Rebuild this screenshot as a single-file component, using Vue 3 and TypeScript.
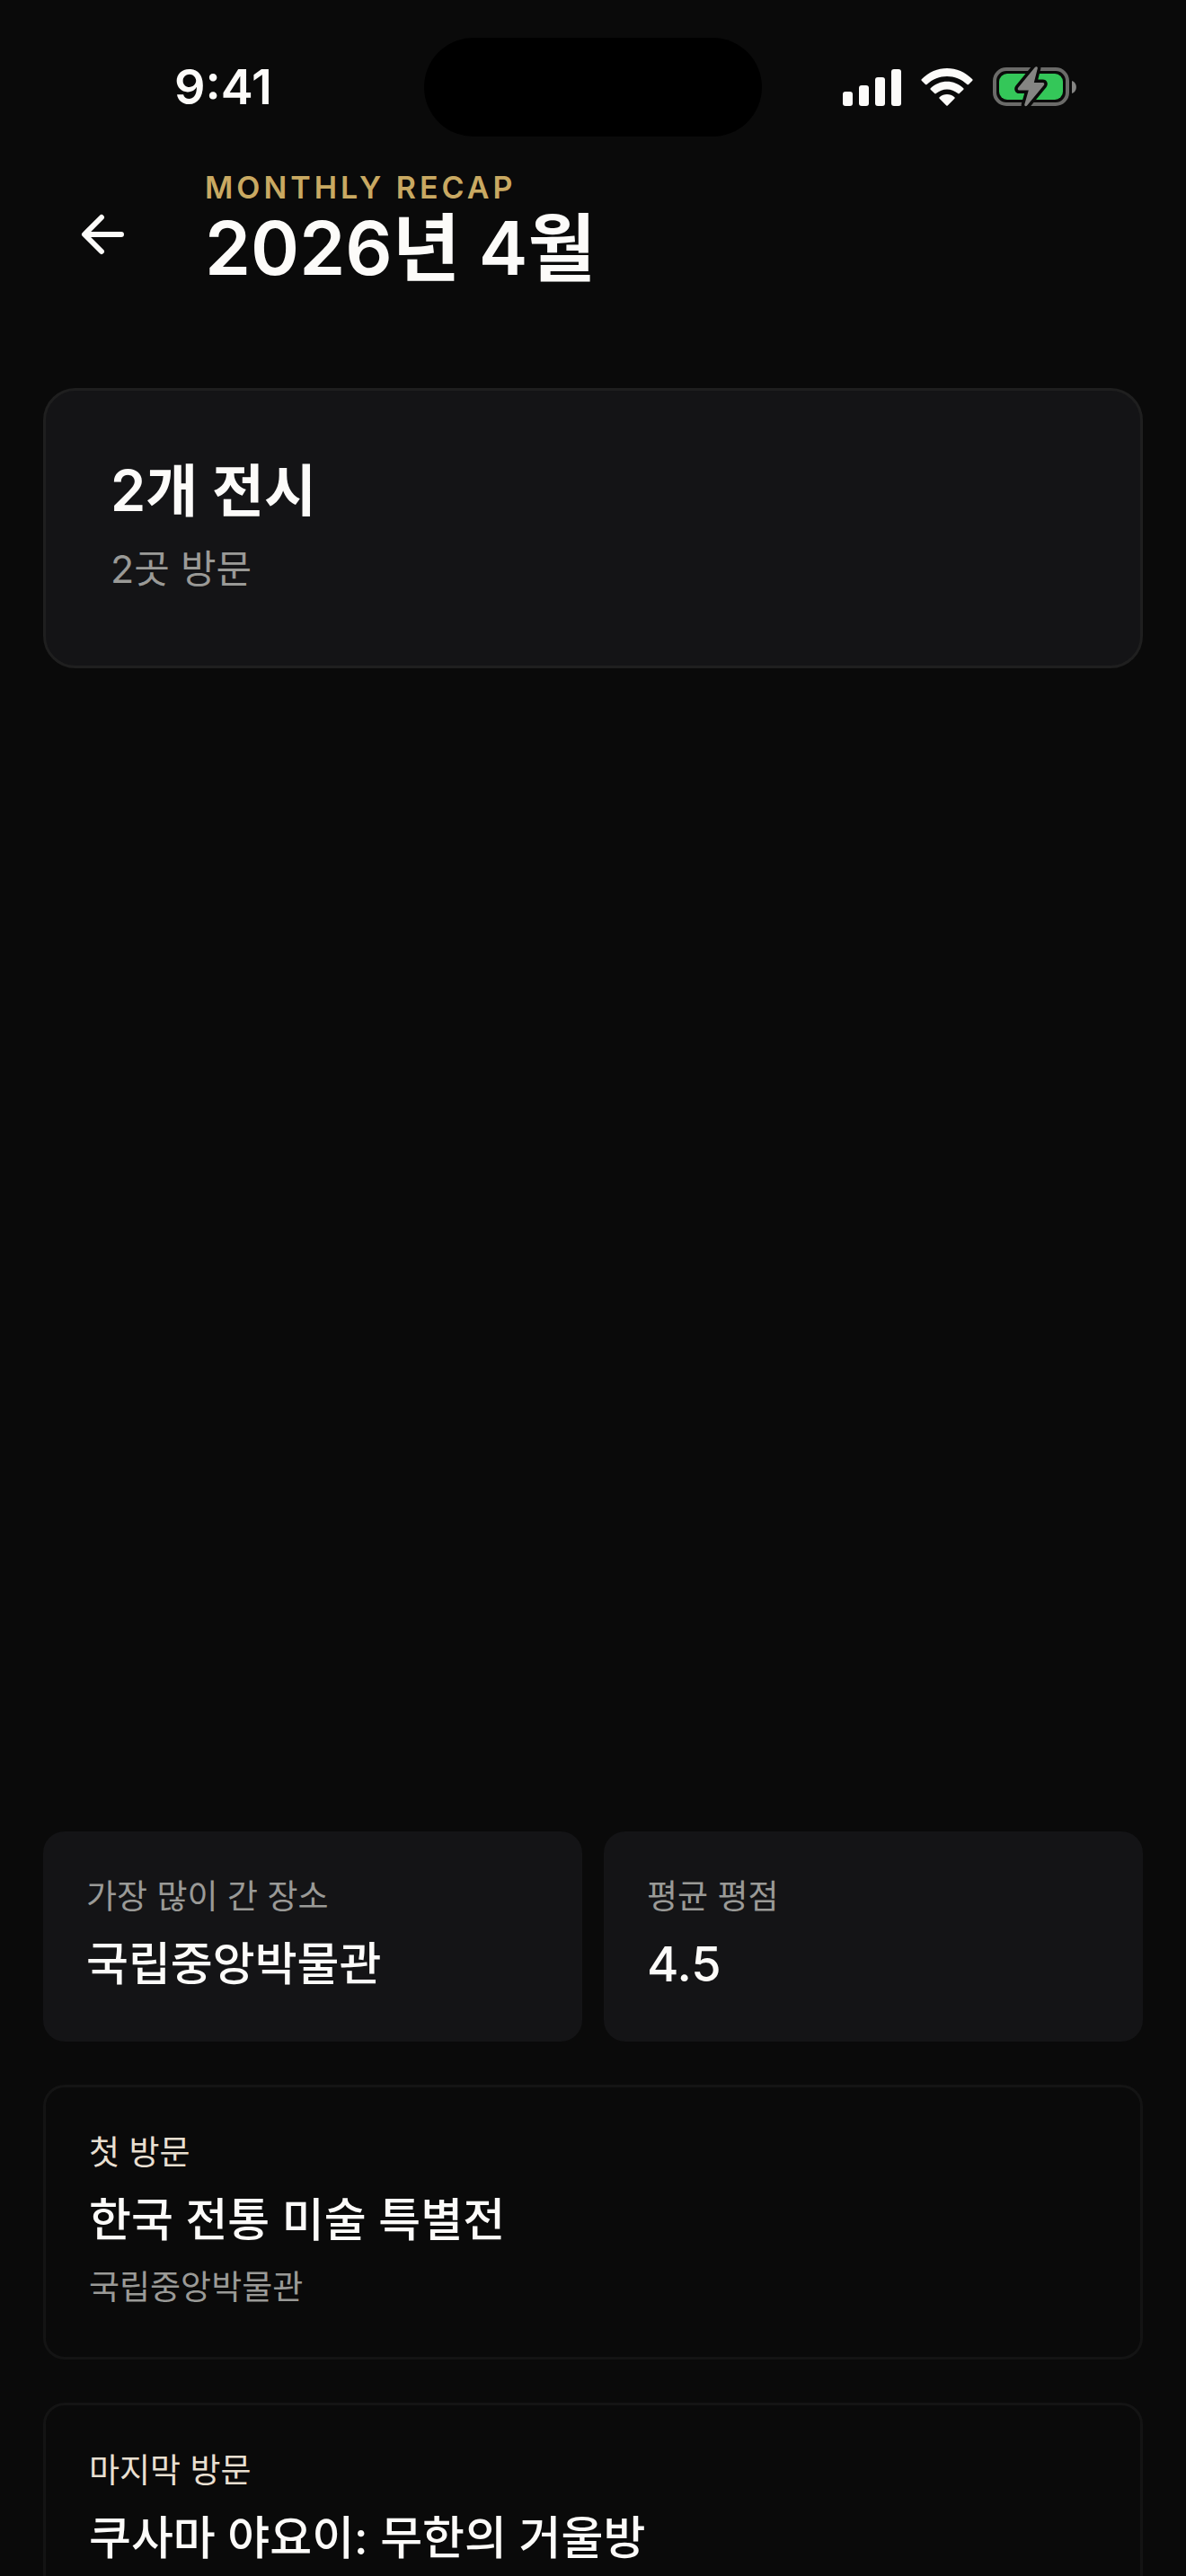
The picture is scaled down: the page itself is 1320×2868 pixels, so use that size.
<script setup lang="ts">
interface Stat {
  label: string
  value: string
  numeric?: boolean
}

interface Visit {
  label: string
  title: string
  place?: string
}

const stats: Stat[] = [
  { label: '가장 많이 간 장소', value: '국립중앙박물관' },
  { label: '평균 평점', value: '4.5', numeric: true },
]

const visits: Visit[] = [
  { label: '첫 방문', title: '한국 전통 미술 특별전', place: '국립중앙박물관' },
  { label: '마지막 방문', title: '쿠사마 야요이: 무한의 거울방' },
]
</script>

<template>
  <div class="screen">
    <div class="status-bar">
      <time class="clock">9:41</time>
      <div class="island"></div>
      <div class="indicators">
        <svg width="65" height="44" viewBox="0 0 65 44" fill="#fcfbf9" aria-hidden="true">
          <rect x="0" y="27" width="11" height="16" rx="3" />
          <rect x="18" y="20" width="11" height="23" rx="3" />
          <rect x="36" y="11" width="11" height="32" rx="3" />
          <rect x="54" y="2" width="11" height="41" rx="3" />
        </svg>
        <svg width="58" height="44" viewBox="0 0 58 44" fill="#fcfbf9" aria-hidden="true">
          <path d="M.7 13.2C16.500-3.200 41.500-3.200 57.300 13.200Q58 14 57.300 14.700L53 19Q52.200 19.700 51.400 19C38.800 6.900 19.200 6.900 6.600 19Q5.800 19.700 5 19L.7 14.700Q0 14 .7 13.200Z" />
          <path d="M10.700 23.300C21 13.200 37 13.200 47.300 23.300Q48 24 47.300 24.700L42.800 29.100Q42 29.800 41.200 29.100C34.200 22.800 23.800 22.800 16.800 29.100Q16 29.800 15.200 29.100L10.700 24.700Q10 24 10.700 23.300Z" />
          <path d="M20.600 33.200C25.400 28.900 32.600 28.900 37.400 33.200Q38.200 34 37.400 34.800L29.700 42.500Q29 43.200 28.300 42.500L20.600 34.800Q19.800 34 20.600 33.200Z" />
        </svg>
        <svg width="93" height="46" viewBox="0 0 93 46" aria-hidden="true">
          <rect x="2" y="3" width="81" height="39" rx="13" fill="none" stroke="#6b6b69" stroke-width="4" />
          <rect x="7" y="8" width="71" height="29" rx="9" fill="#34c759" />
          <path d="M88 16C94.500 18 94.500 28 88 30Z" fill="#858583" />
          <path d="M46.800 1C48.200-.4 50.200.2 49.800 2.200L45.800 18H55.500C57.300 18 57.800 19.600 56.700 21L38.300 43.300C37 44.900 34.800 44.200 35.300 42.200L39.800 26.500H29.500C27.700 26.500 27.200 24.800 28.300 23.400Z" fill="#858583" stroke="#0a0a0a" stroke-width="7" stroke-linejoin="round" paint-order="stroke" />
        </svg>
      </div>
    </div>

    <header class="header">
      <button class="back" type="button" aria-label="뒤로">
        <svg width="66" height="66" viewBox="0 0 66 66" fill="none" stroke="#fcfbf9" stroke-width="6" stroke-linecap="round" stroke-linejoin="round" aria-hidden="true">
          <path d="M54 33H14M32 14L13 33L32 52" />
        </svg>
      </button>
      <div class="heading">
        <p class="eyebrow">MONTHLY RECAP</p>
        <h1 class="month">2026년 4월</h1>
      </div>
    </header>

    <main class="content">
      <section class="summary">
        <h2 class="summary-count">2개 전시</h2>
        <p class="summary-places">2곳 방문</p>
      </section>

      <div class="gallery"></div>

      <dl class="stats">
        <div v-for="stat in stats" :key="stat.label" class="stat">
          <dt class="label">{{ stat.label }}</dt>
          <dd class="value" :class="{ numeric: stat.numeric }">{{ stat.value }}</dd>
        </div>
      </dl>

      <article v-for="visit in visits" :key="visit.label" class="visit">
        <p class="label accent">{{ visit.label }}</p>
        <h3 class="value">{{ visit.title }}</h3>
        <p v-if="visit.place" class="label place">{{ visit.place }}</p>
      </article>
    </main>
  </div>
</template>

<style>
body {
  margin: 0;
  background: #0a0a0a;
}
</style>

<style scoped>
.screen {
  display: flex;
  flex-direction: column;
  height: 100vh;
  overflow: hidden;
  background: #0a0a0a;
  color: #fcfbf9;
  font-family: Inter, "Noto Sans CJK KR", sans-serif;
}

p,
h1,
h2,
h3,
dl,
dd {
  margin: 0;
}

.status-bar {
  flex: none;
  display: grid;
  grid-template-columns: 1fr auto 1fr;
  align-items: center;
  padding: 42px 0 34px;
}

.clock {
  padding-left: 194px;
  font-size: 54px;
  line-height: 66px;
  font-weight: 600;
}

.island {
  width: 376px;
  height: 110px;
  border-radius: 55px;
  background: #000;
}

.indicators {
  display: flex;
  justify-content: flex-end;
  align-items: center;
  gap: 22px;
  padding-right: 122px;
}

.header {
  flex: none;
  display: flex;
  align-items: center;
  gap: 48px;
  min-height: 150px;
  padding: 0 48px;
}

.back {
  display: flex;
  align-items: center;
  justify-content: center;
  width: 132px;
  height: 132px;
  padding: 0;
  border: 0;
  background: none;
}

.heading {
  padding-bottom: 10px;
}

.eyebrow {
  color: #c9a962;
  font-size: 34px;
  line-height: 42px;
  font-weight: 600;
  letter-spacing: 4px;
}

.month {
  font-size: 82px;
  line-height: 94px;
  font-weight: 600;
}

.content {
  flex: 1;
  display: flex;
  flex-direction: column;
  gap: 48px;
  min-height: 0;
  padding: 96px 48px 0;
  overflow-y: auto;
  scrollbar-width: none;
}

.content > * {
  flex: none;
}

.summary {
  padding: 72px;
  border: 3px solid #1f1f1f;
  border-radius: 36px;
  background: #141416;
}

.summary-count {
  font-size: 63px;
  line-height: 78px;
  font-weight: 600;
}

.summary-places {
  margin-top: 12px;
  color: #9a9a97;
  font-size: 43px;
  line-height: 72px;
}

.gallery {
  aspect-ratio: 1224 / 1199;
}

.stats {
  display: grid;
  grid-template-columns: 1fr 1fr;
  gap: 24px;
}

.stat {
  padding: 48px;
  border-radius: 24px;
  background: #141416;
}

.label {
  color: #9a9a97;
  font-size: 37px;
  line-height: 50px;
}

.value {
  margin-top: 12px;
  font-size: 51px;
  line-height: 76px;
  font-weight: 500;
}

.numeric {
  font-size: 54px;
}

.visit {
  padding: 48px 48px 52px;
  border: 3px solid #141414;
  border-radius: 24px;
}

.accent {
  color: #e8dfd0;
}

.place {
  margin-top: 12px;
}
</style>
